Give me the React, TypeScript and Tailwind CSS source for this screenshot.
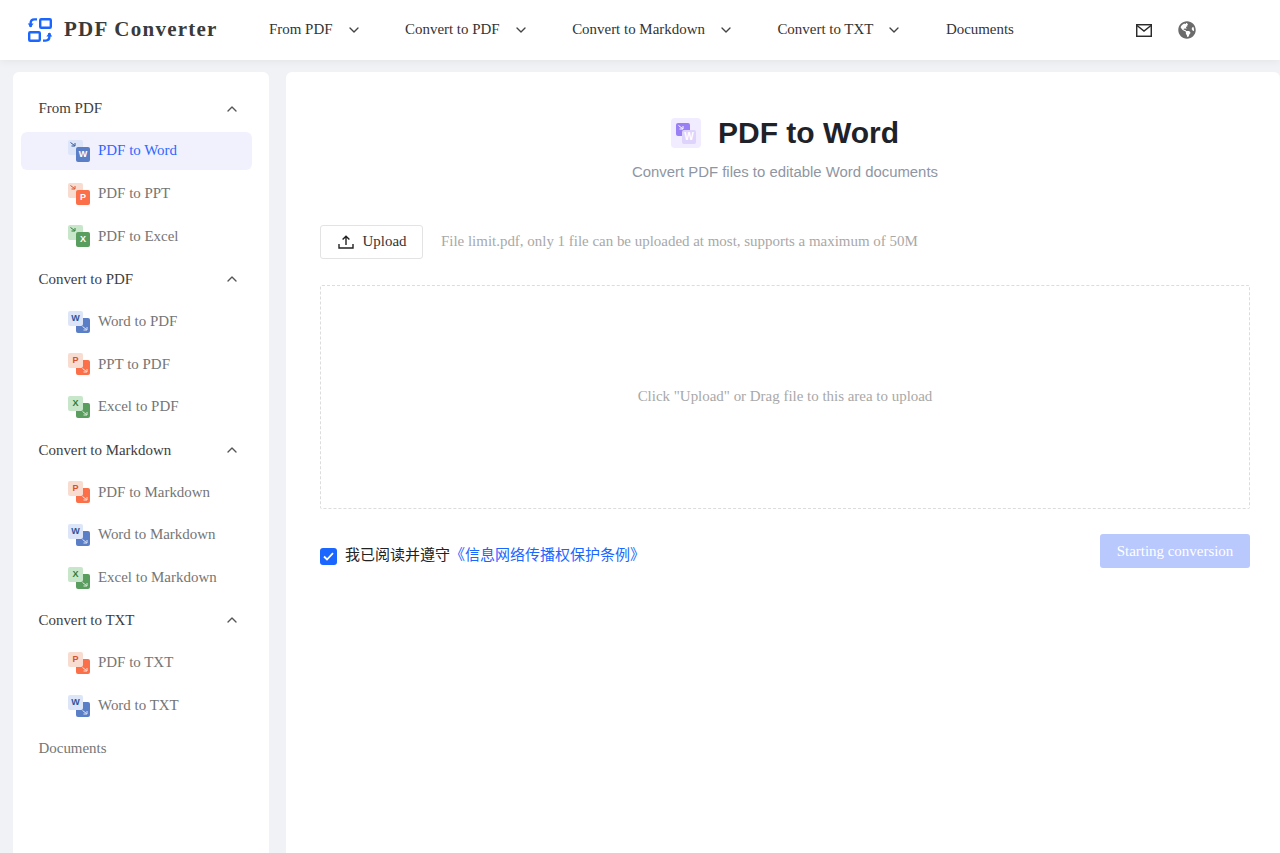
import { ChevronDown, ChevronUp } from 'lucide-react'
import { FaGlobeAmericas } from 'react-icons/fa'

type Tone = 'word' | 'ppt' | 'excel'

const tones = {
  word: { light: 'bg-[#dde5f8]', dark: 'bg-[#5b7fc7]', text: 'text-[#2f5597]', letter: 'W' },
  ppt: { light: 'bg-[#f8dcd0]', dark: 'bg-[#fb7049]', text: 'text-[#d8512c]', letter: 'P' },
  excel: { light: 'bg-[#c8e6c9]', dark: 'bg-[#5a9e5f]', text: 'text-[#2f7a38]', letter: 'X' },
}

function TinyArrow({ className }: { className: string }) {
  return (
    <svg width="6" height="5" viewBox="0 0 6 5" fill="none" stroke="currentColor" strokeWidth="1" className={className}>
      <path d="M0.5 0.5L4.5 3.5M5 1V4H1.5" />
    </svg>
  )
}

// from = the small arrow is on the light sheet, the letter on the dark one
function FileIcon({ tone, from }: { tone: Tone; from: boolean }) {
  const t = tones[tone]
  return (
    <div className="relative w-[22px] h-[22px] shrink-0">
      <div className={`absolute right-0 bottom-0 w-[14px] h-[15px] rounded-[2px] ${t.dark} ${from ? 'z-10' : ''} flex items-center justify-center`}>
        {from && <span className="text-[9px] leading-none font-bold text-white font-['Liberation_Sans']">{t.letter}</span>}
        {!from && <TinyArrow className="absolute right-[2px] bottom-[2px] text-white opacity-80" />}
      </div>
      <div className={`absolute left-0 top-0 w-[15px] h-[15px] rounded-[2px] ${t.light} flex items-center justify-center`}>
        {!from && <span className={`text-[9px] leading-none font-bold font-['Liberation_Sans'] ${t.text}`}>{t.letter}</span>}
        {from && <TinyArrow className={`absolute left-[2px] top-[2px] ${t.text}`} />}
      </div>
    </div>
  )
}

function Logo() {
  return (
    <svg width="26" height="26" viewBox="0 0 26 26" fill="none" stroke="#1a66ff" strokeWidth="2.4">
      <rect x="13.2" y="2.2" width="10.6" height="8.6" rx="1" />
      <rect x="2.2" y="15.2" width="10.6" height="8.6" rx="1" />
      <path d="M10 2.4H7.4C5 2.4 3.6 4 3.6 6.4V10" />
      <path d="M0.8 6.6L3.6 10.4L6.6 6.6" fill="#1a66ff" stroke="none" />
      <path d="M16 23.6H18.6C21 23.6 22.4 22 22.4 19.6V16" />
      <path d="M19.4 19.4L22.4 15.6L25.2 19.4" fill="#1a66ff" stroke="none" />
    </svg>
  )
}

const navItems = [
  { label: 'From PDF', menu: true },
  { label: 'Convert to PDF', menu: true },
  { label: 'Convert to Markdown', menu: true },
  { label: 'Convert to TXT', menu: true },
  { label: 'Documents', menu: false },
]

type SideRow = { label: string; head?: boolean; tone?: Tone; from?: boolean; active?: boolean; plain?: boolean }

const sideRows: SideRow[] = [
  { label: 'From PDF', head: true },
  { label: 'PDF to Word', tone: 'word', from: true, active: true },
  { label: 'PDF to PPT', tone: 'ppt', from: true },
  { label: 'PDF to Excel', tone: 'excel', from: true },
  { label: 'Convert to PDF', head: true },
  { label: 'Word to PDF', tone: 'word', from: false },
  { label: 'PPT to PDF', tone: 'ppt', from: false },
  { label: 'Excel to PDF', tone: 'excel', from: false },
  { label: 'Convert to Markdown', head: true },
  { label: 'PDF to Markdown', tone: 'ppt', from: false },
  { label: 'Word to Markdown', tone: 'word', from: false },
  { label: 'Excel to Markdown', tone: 'excel', from: false },
  { label: 'Convert to TXT', head: true },
  { label: 'PDF to TXT', tone: 'ppt', from: false },
  { label: 'Word to TXT', tone: 'word', from: false },
  { label: 'Documents', plain: true },
]

function Sidebar() {
  return (
    <aside className="w-[256px] shrink-0 bg-white rounded-t-md pt-[17.5px] px-2 flex flex-col gap-[4.67px]">
      {sideRows.map((row) => {
        if (row.head) {
          return (
            <div key={row.label} className="h-[38px] shrink-0 flex items-center justify-between pl-[17.5px] pr-[21px] text-[#3d3d3d]">
              <span>{row.label}</span>
              <ChevronUp size={16} strokeWidth={2} className="text-[#555]" />
            </div>
          )
        }
        if (row.plain) {
          return (
            <div key={row.label} className="h-[38px] shrink-0 flex items-center pl-[17.5px] text-[#757575]">
              {row.label}
            </div>
          )
        }
        return (
          <div
            key={row.label}
            className={`h-[38px] w-[231px] shrink-0 flex items-center gap-[8px] pl-[47px] rounded-md ${row.active ? 'bg-[#f1f1fe] text-[#2f66ff]' : 'text-[#757575]'}`}
          >
            <FileIcon tone={row.tone as Tone} from={!!row.from} />
            <span className="pb-[1px]">{row.label}</span>
          </div>
        )
      })}
    </aside>
  )
}

export default function App() {
  return (
    <div className="h-[853px] overflow-hidden bg-[#f1f2f6] flex flex-col font-['Liberation_Serif',serif] text-[14.94px]">
      {/* Header */}
      <header className="h-[60px] shrink-0 bg-white shadow-[0_2px_8px_rgba(0,0,0,0.05)] flex items-center pl-[27px] relative z-10">
        <Logo />
        <span className="ml-[11px] w-[194px] text-[21px] font-bold tracking-[1.25px] text-[#3a3a3a] whitespace-nowrap">PDF Converter</span>
        <nav className="ml-[11px] flex items-center gap-[43.5px] text-[#333]">
          {navItems.map((item) => (
            <div key={item.label} className="flex items-center gap-[13px] whitespace-nowrap">
              <span className="pb-[2px]">{item.label}</span>
              {item.menu && <ChevronDown size={16} strokeWidth={2} className="text-[#444]" />}
            </div>
          ))}
        </nav>
        <div className="ml-[122px] flex items-center gap-[26px]">
          <svg width="16" height="13" viewBox="0 0 16 13" fill="none" stroke="#2b2b2b" strokeWidth="1.5">
            <rect x="0.7" y="0.7" width="14.6" height="11.6" />
            <path d="M1 1.5L8 7L15 1.5" />
          </svg>
          <FaGlobeAmericas size={18} className="text-[#6b6b6b]" />
        </div>
      </header>

      <div className="flex-1 flex pt-3 pl-[13px] gap-[17px] min-h-0">
        <Sidebar />

        {/* Main panel */}
        <main className="flex-1 bg-white rounded-t-md pl-[34px] pr-[30px] pt-[40px]">
          <div className="flex items-center justify-center gap-[17px] h-[42px]">
            <div className="relative w-[30px] h-[30px] rounded-[4px] bg-[#f1ecff]">
              <div className="absolute left-[5px] top-[5px] w-[14px] h-[13px] rounded-[2px] bg-[#9a80f5]">
                <TinyArrow className="absolute left-[2px] top-[2px] text-white" />
              </div>
              <div className="absolute right-[5px] bottom-[4px] w-[14px] h-[14px] rounded-[2px] bg-[#ddd3fb] flex items-center justify-center text-[10px] leading-none font-bold text-white font-['Liberation_Sans']">W</div>
            </div>
            <h1 className="text-[30px] leading-none font-bold text-[#1f2329] font-['Liberation_Sans',sans-serif]">PDF to Word</h1>
          </div>
          <p className="mt-[7px] text-center text-[14.9px] leading-[22px] text-[#8f96a3] font-['Liberation_Sans',sans-serif]">
            Convert PDF files to editable Word documents
          </p>

          <div className="mt-[42px] flex items-center gap-[18px]">
            <button className="w-[103px] h-[34px] pb-[2px] border border-[#e3e3e3] rounded-[3px] flex items-center justify-center gap-[9px] pl-[1px] text-[#333]">
              <svg width="16" height="14" viewBox="0 0 16 14" fill="none" stroke="#222" strokeWidth="1.4" className="mt-[2px]">
                <path d="M8 10V1.5M4.6 4.6L8 1.2L11.4 4.6M1 9V13H15V9" />
              </svg>
              Upload
            </button>
            <span className="pb-[2px] text-[#a8a8a8]">File limit.pdf, only 1 file can be uploaded at most, supports a maximum of 50M</span>
          </div>

          <div className="mt-[26px] h-[224px] pb-[2px] border border-dashed border-[#dcdcdc] rounded-[2px] flex items-center justify-center text-[#a8a8a8]">
            Click "Upload" or Drag file to this area to upload
          </div>

          <div className="mt-[25px] flex items-start justify-between">
            <div className="mt-[13px] flex items-center gap-[8px] h-[18px]">
              <span className="w-[17px] h-[17px] rounded-[3px] bg-[#1a66ff] flex items-center justify-center">
                <svg width="11" height="9" viewBox="0 0 11 9" fill="none" stroke="#fff" strokeWidth="1.8">
                  <path d="M1 4.5L4 7.5L10 1.2" />
                </svg>
              </span>
              <span className="font-['Noto_Sans_CJK_SC',sans-serif] text-[15px] text-[#222] whitespace-nowrap pb-[3px]">
                我已阅读并遵守<span className="text-[#1a66ff]">《信息网络传播权保护条例》</span>
              </span>
            </div>
            <button className="w-[150px] h-[34px] rounded-[3px] bg-[#b9c8fd] text-white">Starting conversion</button>
          </div>
        </main>
      </div>
    </div>
  )
}
